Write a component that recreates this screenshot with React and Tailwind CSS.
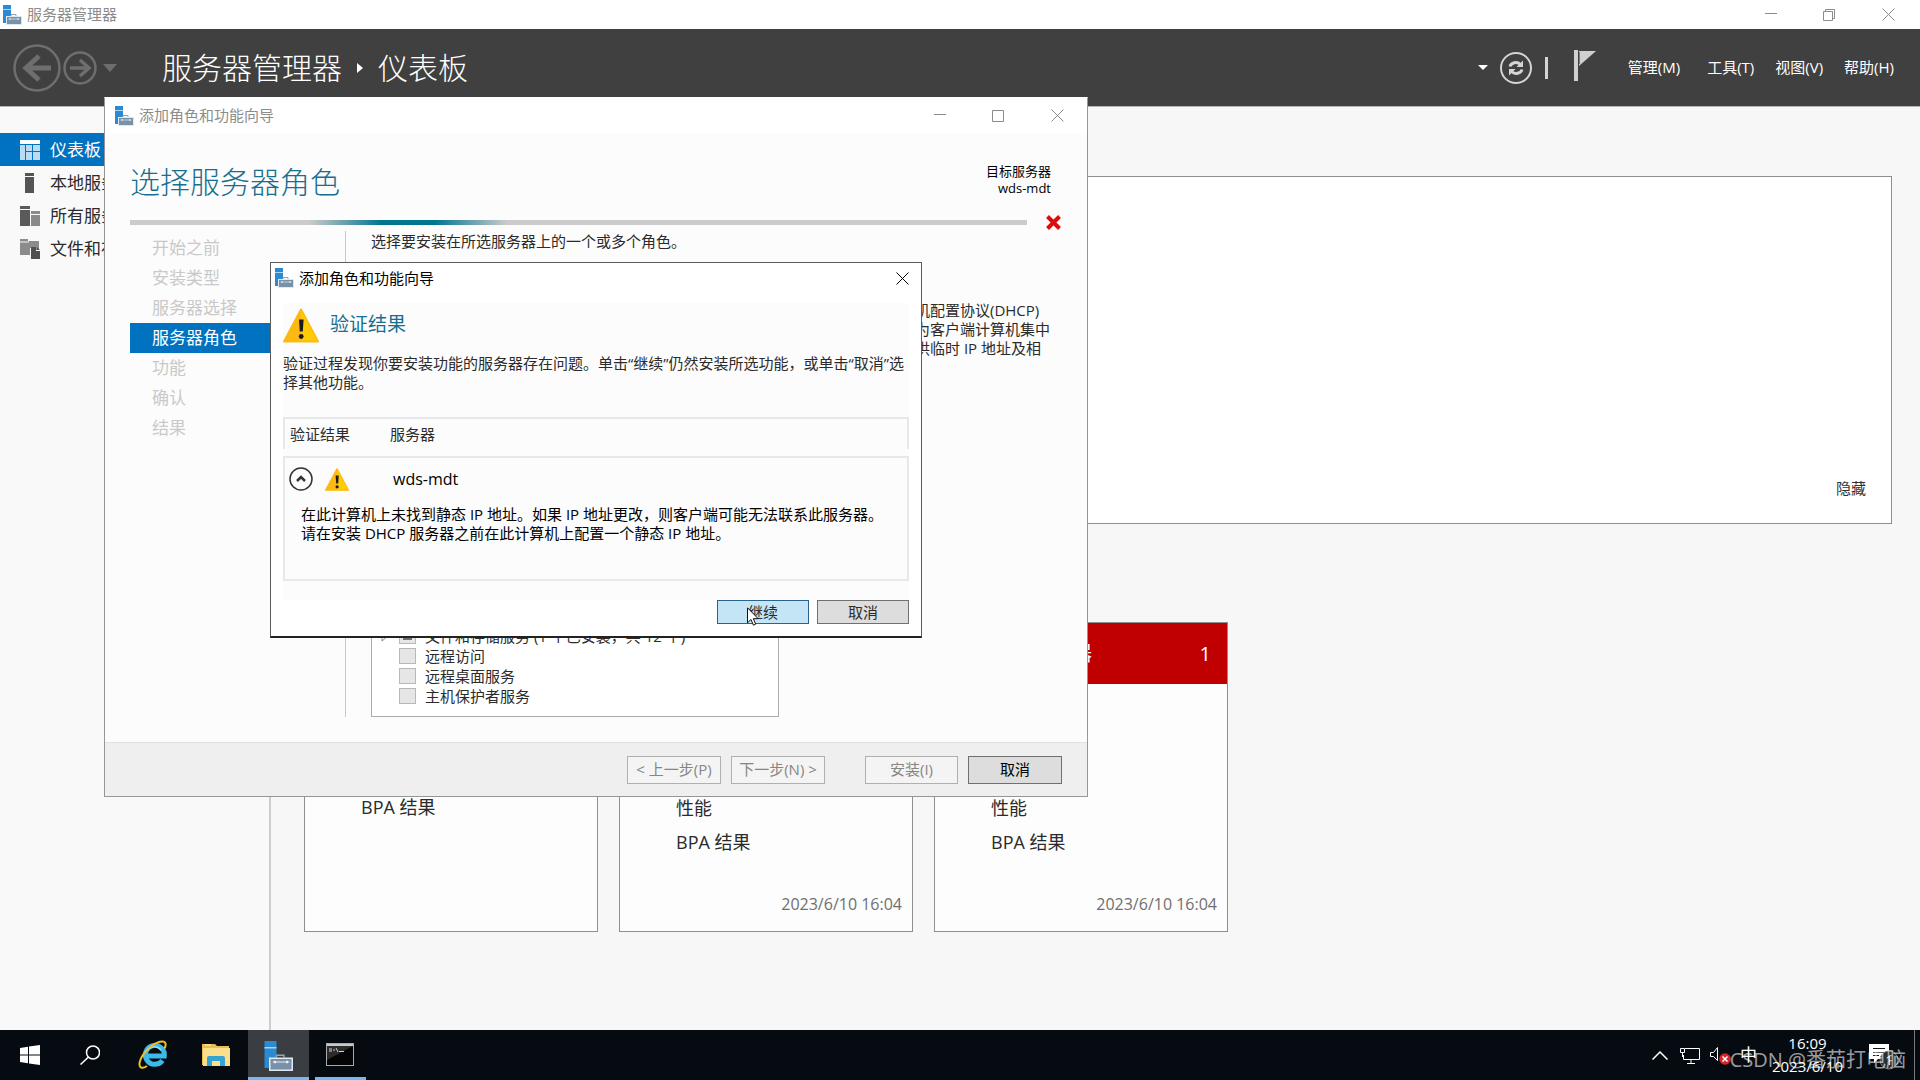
import { useState } from "react";

const navItems = [
  { label: "仪表板", icon: DashboardIcon, active: true },
  { label: "本地服务器", icon: ServerIcon },
  { label: "所有服务器", icon: ServersIcon },
  { label: "文件和存储服务", icon: StorageIcon },
];

const menus = ["管理(M)", "工具(T)", "视图(V)", "帮助(H)"];

const steps = ["开始之前", "安装类型", "服务器选择", "服务器角色", "功能", "确认", "结果"];

const roles = [
  { label: "文件和存储服务 (1 个已安装，共 12 个)", partial: true },
  { label: "远程访问" },
  { label: "远程桌面服务" },
  { label: "主机保护者服务" },
];

const tiles = [
  { rows: ["BPA 结果"], offset: true },
  { rows: ["性能", "BPA 结果"], time: "2023/6/10 16:04" },
  { rows: ["性能", "BPA 结果"], time: "2023/6/10 16:04", title: "所有服务器", count: 1 },
];

/* ---------- icons ---------- */

function AppIcon({ className }) {
  return (
    <svg viewBox="0 0 20 20" className={className} aria-hidden="true">
      <path d="M1 0h8v18H1z" fill="#2b8ad2" />
      <path d="M1 4h8v1H1z" fill="#a9d4f2" />
      <path d="M9 11V9.500h5V11" fill="none" stroke="#8fa5b9" />
      <rect x="4.500" y="11.500" width="15" height="8" fill="#7890a8" stroke="#dfe8f0" />
      <path d="M6.500 14h11" stroke="#dfe8f0" strokeWidth=".7" fill="none" />
      <path d="M8 13.200v1.600M16 13.200v1.600" stroke="#fff" fill="none" />
    </svg>
  );
}

function DashboardIcon() {
  return (
    <svg width="20" height="20" viewBox="0 0 20 20" aria-hidden="true">
      <path d="M0 0h20v4H0z" fill="#fff" />
      <path d="M0 5h5v15H0zM6 5h6v6H6zM13 5h7v6h-7zM6 12h6v8H6zM13 12h7v8h-7z" fill="#b9dcf3" />
    </svg>
  );
}

function ServerIcon() {
  return (
    <svg width="20" height="20" viewBox="0 0 20 20" aria-hidden="true">
      <path d="M5 0h9v3H5zM5 4h9v16H5z" fill="#555" />
    </svg>
  );
}

function ServersIcon() {
  return (
    <svg width="20" height="20" viewBox="0 0 20 20" aria-hidden="true">
      <path d="M0 0h10v3H0zM0 4h10v16H0z" fill="#5a5a5a" />
      <path d="M11 5h9v3h-9zM11 9h9v11h-9z" fill="#8a8a8a" />
    </svg>
  );
}

function StorageIcon() {
  return (
    <svg width="20" height="20" viewBox="0 0 20 20" aria-hidden="true">
      <path d="M0 0h8v2h11v9h-5V9h-4v7H0z" fill="#8c8c8c" />
      <path d="M0 3h9" stroke="#f8f8f8" />
      <path d="M11 8h5v4h4v8h-9z" fill="#505050" />
      <path d="M17 8l3 3h-3z" fill="#505050" />
    </svg>
  );
}

function WarningIcon({ className }) {
  return (
    <svg viewBox="0 0 36 34" className={className} aria-hidden="true">
      <path d="M18 1L35 33H1z" fill="#fdb913" stroke="#fdb913" strokeWidth="2" strokeLinejoin="round" />
      <path d="M18 2L34 32H18z" fill="#ffcb05" />
      <path d="M16 11h4.600l-.8 12h-3z" fill="#1a1a1a" />
      <circle cx="18.200" cy="28" r="2.400" fill="#1a1a1a" />
    </svg>
  );
}

function CloseGlyph() {
  return (
    <svg width="13" height="13" viewBox="0 0 13 13" fill="none" stroke="currentColor" aria-hidden="true">
      <path d="M.5 .5l12 12M12.500 .5l-12 12" />
    </svg>
  );
}

function MinGlyph() {
  return (
    <svg width="12" height="13" viewBox="0 0 12 13" stroke="currentColor" aria-hidden="true">
      <path d="M0 5.500h12" />
    </svg>
  );
}

function MaxGlyph() {
  return (
    <svg width="12" height="12" viewBox="0 0 12 12" fill="none" stroke="currentColor" aria-hidden="true">
      <path d="M.5 .5h11v11H.5z" />
    </svg>
  );
}

function RestoreGlyph() {
  return (
    <svg width="12" height="12" viewBox="0 0 12 12" fill="none" stroke="currentColor" aria-hidden="true">
      <path d="M.5 2.500h9v9h-9zM2.500 2.500v-2h9v9h-2" />
    </svg>
  );
}

/* ---------- main window ---------- */

function CaptionButtons({ maximized = false }) {
  return (
    <div className="flex text-[#8c8c8c]">
      <button aria-label="最小化" className="flex h-7 w-[58px] items-center justify-center"><MinGlyph /></button>
      <button aria-label={maximized ? "还原" : "最大化"} className="flex h-7 w-[58px] items-center justify-center">
        {maximized ? <RestoreGlyph /> : <MaxGlyph />}
      </button>
      <button aria-label="关闭" className="flex h-7 w-[60px] items-center justify-center"><CloseGlyph /></button>
    </div>
  );
}

function Header() {
  return (
    <header className="flex h-[78px] shrink-0 items-center border-b border-[#b4b4b4] bg-[#404040] pl-[13px] text-white">
      <button aria-label="后退">
        <svg width="48" height="48" viewBox="0 0 48 48" fill="none" stroke="#6e6e6e" aria-hidden="true">
          <circle cx="24" cy="24" r="22.500" strokeWidth="2.500" />
          <path d="M38 24H13M26 12L13 24l13 12" strokeWidth="5" />
        </svg>
      </button>
      <button aria-label="前进" className="ml-0.5">
        <svg width="34" height="34" viewBox="0 0 34 34" fill="none" stroke="#6e6e6e" aria-hidden="true">
          <circle cx="17" cy="17" r="15.500" strokeWidth="2.500" />
          <path d="M7 17h18M17 9l9 8-9 8" strokeWidth="3.500" />
        </svg>
      </button>
      <button aria-label="历史记录" className="ml-1.5">
        <svg width="14" height="8" viewBox="0 0 14 8" aria-hidden="true"><path d="M0 0h14L7 8z" fill="#6e6e6e" /></svg>
      </button>
      <h1 className="ml-[45px] flex items-center text-[30px] leading-10 font-light">
        服务器管理器
        <svg width="6" height="10" viewBox="0 0 6 10" className="mx-[15px]" aria-hidden="true"><path d="M0 0l6 5-6 5z" fill="#fff" /></svg>
        仪表板
      </h1>
      <div className="ml-auto flex items-center pr-[26px]">
        <button aria-label="刷新选项">
          <svg width="10" height="5" viewBox="0 0 10 5" aria-hidden="true"><path d="M0 0h10L5 5z" fill="#fff" /></svg>
        </button>
        <button aria-label="刷新" className="ml-3">
          <svg width="32" height="32" viewBox="0 0 32 32" fill="none" stroke="#d4d4d4" aria-hidden="true">
            <circle cx="16" cy="16" r="15" strokeWidth="2" />
            <path d="M10 14.500c1-4 7-5.500 10.500-2M22 17.500c-1 4-7 5.500-10.500 2" strokeWidth="3" />
            <path d="M23 8.500v6.500h-6.500zM9 23.500V17h6.500z" fill="#d4d4d4" stroke="none" />
          </svg>
        </button>
        <div className="ml-[13px] h-[22px] w-[3px] bg-[#d4d4d4]" />
        <button aria-label="通知" className="ml-[26px] mb-1">
          <svg width="22" height="31" viewBox="0 0 22 31" aria-hidden="true">
            <path d="M0 0h4v31H0z" fill="#d0d0d0" />
            <path d="M5 1h17L5 16z" fill="#d0d0d0" />
            <path d="M5.500 2v12" stroke="#777" />
          </svg>
        </button>
        <nav className="ml-8 flex gap-[21px] pb-0.5 text-[15px] leading-5">
          {menus.map((m) => (
            <button key={m} className="first:mr-1.5">{m}</button>
          ))}
        </nav>
      </div>
    </header>
  );
}

function SideNav() {
  return (
    <nav className="w-[271px] shrink-0 border-r-2 border-[#cdcdcd] bg-[#f9f9f9] pt-[26px]">
      {navItems.map(({ label, icon: Icon, active }) => (
        <a
          key={label}
          href="#"
          className={`flex h-[33px] items-center gap-2.5 pl-5 text-[17px] whitespace-nowrap ${active ? "bg-[#0072c0] text-white" : "text-[#2b2b2b]"}`}
        >
          <Icon />
          {label}
        </a>
      ))}
    </nav>
  );
}

function Tile({ rows, time, title, count, offset }) {
  return (
    <section className="flex h-[310px] w-[294px] flex-col border border-[#8f8f8f] bg-[#fdfdfd]">
      {title && (
        <h2 className="flex h-[61px] shrink-0 items-center justify-between bg-[#c00000] pr-4 pl-[57px] text-[20px] text-white">
          {title}
          <span>{count}</span>
        </h2>
      )}
      <div className={`mt-auto pl-14 text-[18px] leading-[34px] text-[#2b2b2b] ${offset ? "mb-[35px]" : ""}`}>
        {rows.map((r) => (
          <p key={r}>{r}</p>
        ))}
      </div>
      <div className="flex h-[72px] items-center justify-end pt-5 pr-2.5 pb-0.5 text-[16px] text-[#6f6f6f]">{time}</div>
    </section>
  );
}

function Dashboard() {
  return (
    <main className="flex-1 bg-[#f7f7f7] pt-[69px] pr-7 pl-[33px]">
      <section className="flex h-[348px] items-end justify-end border border-[#8f8f8f] bg-white pr-[25px] pb-[25px]">
        <button className="text-[15px] leading-5 text-[#333]">隐藏</button>
      </section>
      <div className="mt-[98px] flex gap-[21px]">
        {tiles.map((t, i) => (
          <Tile key={i} {...t} />
        ))}
      </div>
    </main>
  );
}

/* ---------- wizard ---------- */

function RoleRow({ label, partial }) {
  return (
    <label className="flex h-5 items-center text-[15px] whitespace-nowrap text-[#2b2b2b]">
      <span className="w-[18px]">
        {partial && (
          <svg width="8" height="12" viewBox="0 0 8 12" fill="#fff" stroke="#8a8a8a" aria-hidden="true"><path d="M1 1l6 5-6 5z" /></svg>
        )}
      </span>
      <span className="grid">
        <input type="checkbox" disabled className="col-start-1 row-start-1 h-4 w-[17px] appearance-none border border-[#b8b8b8] bg-[#e6e6e6]" />
        {partial && <span className="col-start-1 row-start-1 m-1 bg-[#707070]" />}
      </span>
      <span className="ml-[9px]">{label}</span>
    </label>
  );
}

function Wizard() {
  return (
    <section
      aria-label="添加角色和功能向导"
      className="absolute top-[97px] left-[104px] flex h-[700px] w-[984px] flex-col border border-[#969696] border-t-white bg-[#fcfcfc]"
    >
      <div className="flex h-[35px] shrink-0 items-center bg-white pl-[9px] text-[15px] text-[#8c8c8c]">
        <AppIcon className="mr-[5px] size-5" />
        <span className="mr-auto">添加角色和功能向导</span>
        <CaptionButtons />
      </div>

      <div className="flex h-[89px] shrink-0 items-center justify-between pr-9 pl-[25px]">
        <h2 className="pt-2 text-[30px] leading-10 font-light text-[#166f8f]">选择服务器角色</h2>
        <p className="pt-1 text-right text-[13px] leading-[17px] text-black">
          目标服务器
          <br />
          wds-mdt
        </p>
      </div>

      <div className="-mt-[7px] flex h-[15px] shrink-0 items-center gap-[19px] pr-[26px] pl-[25px]">
        <div className="h-[5px] flex-1 bg-[linear-gradient(to_right,#cbcbcb_20%,#007590_28%,#007590_34%,#cbcbcb_42%)]" />
        <svg width="15" height="15" viewBox="0 0 15 15" stroke="#e00b0b" strokeWidth="4" aria-hidden="true">
          <path d="M1.500 1.500l12 12M13.500 1.500l-12 12" />
        </svg>
      </div>

      <div className="flex min-h-0 flex-1 pt-px pb-[25px] pl-[25px]">
        <ol className="w-[216px] border-r border-[#c8c8c8] pt-0.5">
          {steps.map((s) => (
            <li
              key={s}
              className={`h-[30px] pl-[22px] text-[17px] leading-[30px] ${s === "服务器角色" ? "bg-[#0072c0] text-white" : "text-[#c9c9c9]"}`}
            >
              {s}
            </li>
          ))}
        </ol>
        <div className="ml-[25px] flex w-[408px] flex-col text-[15px] text-[#2b2b2b]">
          <p className="leading-5">选择要安装在所选服务器上的一个或多个角色。</p>
          <div className="mt-11 flex flex-1 flex-col justify-end border border-[#ababab] bg-white pb-2.5 pl-[9px]">
            {roles.map((r) => (
              <RoleRow key={r.label} {...r} />
            ))}
          </div>
        </div>
        <p className="ml-[91px] pt-[70px] text-[15px] leading-[19px] whitespace-nowrap text-[#2b2b2b]">
          动态主机配置协议(DHCP)
          <br />
          服务器为客户端计算机集中
          <br />
          管理提供临时 IP 地址及相
        </p>
      </div>

      <footer className="flex h-[54px] shrink-0 items-center justify-end border-t border-[#e0e0e0] bg-[#efefef] pr-[25px] text-[15px]">
        <button disabled className="h-7 w-[94px] border border-[#b0b0b0] bg-[#f4f4f4] text-[#868686]">{"< 上一步(P)"}</button>
        <button disabled className="ml-2.5 h-7 w-[94px] border border-[#b0b0b0] bg-[#f4f4f4] text-[#868686]">{"下一步(N) >"}</button>
        <button disabled className="ml-10 h-7 w-[93px] border border-[#b0b0b0] bg-[#f4f4f4] text-[#868686]">安装(I)</button>
        <button className="ml-2.5 h-7 w-[94px] border border-[#707070] bg-[#dddddd] text-black">取消</button>
      </footer>
    </section>
  );
}

function ValidationDialog() {
  const [open, setOpen] = useState(true);
  return (
    <section
      role="dialog"
      aria-label="验证结果"
      className="absolute top-[262px] left-[270px] flex h-[376px] w-[652px] flex-col border border-b-2 border-[#5c5c5c] border-b-[#222] bg-white px-3 text-[15px] text-[#2b2b2b]"
    >
      <div className="-mx-[9px] flex h-[30px] shrink-0 items-center text-black">
        <AppIcon className="mr-[5px] size-5" />
        <span className="mr-auto">添加角色和功能向导</span>
        <button aria-label="关闭" className="flex size-[30px] items-center justify-center pr-0.5"><CloseGlyph /></button>
      </div>

      <div className="mt-2.5 flex flex-1 flex-col bg-[#fcfcfc]">
        <div className="mt-[5px] flex items-center gap-[11px]">
          <WarningIcon className="h-[35px] w-9" />
          <h2 className="pb-1 text-[19px] leading-6 text-[#166f8f]">验证结果</h2>
        </div>
        <p className="mt-[11px] leading-[19px]">
          验证过程发现你要安装功能的服务器存在问题。单击“继续”仍然安装所选功能，或单击“取消”选择其他功能。
        </p>

        <table className="mt-[25px] w-full border-separate border-spacing-0 text-left">
          <thead>
            <tr className="h-8">
              <th className="w-[107px] border-t-2 border-l-2 border-[#e8e8e8] pl-[5px] font-normal">验证结果</th>
              <th className="border-t-2 border-r-2 border-[#e8e8e8] font-normal">服务器</th>
            </tr>
          </thead>
          <tbody className="before:block before:h-[7px] before:content-['']">
            <tr className="h-11">
              <td className="border-t-2 border-l-2 border-[#e8e8e8] pl-1">
                <div className="flex items-center gap-3">
                  <button aria-label="折叠" aria-expanded={open} onClick={() => setOpen((o) => !o)}>
                    <svg width="24" height="24" viewBox="0 0 24 24" fill="none" stroke="#333" aria-hidden="true">
                      <circle cx="12" cy="12" r="11" strokeWidth="1.500" />
                      <path d="M8 14l4-4 4 4" strokeWidth="2.500" />
                    </svg>
                  </button>
                  <WarningIcon className="h-[23px] w-6" />
                </div>
              </td>
              <td className="border-t-2 border-r-2 border-[#e8e8e8] pl-[3px] text-[16px] text-black">wds-mdt</td>
            </tr>
            <tr className="h-[81px]">
              <td colSpan={2} className="border-x-2 border-b-2 border-[#e8e8e8] pt-[5px] pl-4 align-top leading-[19px] text-black">
                {open && (
                  <>
                    在此计算机上未找到静态 IP 地址。如果 IP 地址更改，则客户端可能无法联系此服务器。
                    <br />
                    请在安装 DHCP 服务器之前在此计算机上配置一个静态 IP 地址。
                  </>
                )}
              </td>
            </tr>
          </tbody>
        </table>
      </div>

      <div className="flex shrink-0 justify-end gap-2 pb-3">
        <button className="h-6 w-[92px] border border-[#2c628b] bg-[#c4e5f6] leading-5">继续</button>
        <button className="h-6 w-[92px] border border-[#707070] bg-[#dddddd] leading-5">取消</button>
      </div>

      <svg width="12" height="19" viewBox="0 0 12 19" className="absolute top-[344px] left-[476px]" aria-hidden="true">
        <path d="M.5 .8v15l3.500-3.300 2.400 5.700 2.300-1-2.400-5.500h4.900z" fill="#fff" stroke="#111" />
      </svg>
    </section>
  );
}

/* ---------- taskbar ---------- */

function Taskbar() {
  return (
    <footer className="relative flex h-[50px] shrink-0 bg-[#060b11] text-white">
      <button aria-label="开始" className="flex w-[60px] items-center justify-center">
        <svg width="20" height="20" viewBox="0 0 20 20" fill="#fff" aria-hidden="true">
          <path d="M0 3l8-1.200v7.700H0zM9 1.600L20 0v9.500H9zM0 10.500h8v7.700L0 17zM9 10.500h11V20L9 18.400z" />
        </svg>
      </button>
      <button aria-label="搜索" className="flex w-[60px] items-center justify-center">
        <svg width="20" height="20" viewBox="0 0 20 20" fill="none" stroke="#fff" strokeWidth="1.500" aria-hidden="true">
          <circle cx="13" cy="7.500" r="6.500" />
          <path d="M8.500 12L.5 19.500" />
        </svg>
      </button>
      <button aria-label="Internet Explorer" className="flex w-[66px] items-center justify-center">
        <svg width="30" height="30" viewBox="0 0 30 30" fill="none" aria-hidden="true">
          <path d="M24.500 20.500a9.500 9.500 0 1 1 1.800-4.500H9" stroke="#3cb8ec" strokeWidth="5" />
          <path d="M8 12a9 9 0 0 1 15-2" stroke="#8fe0fb" strokeWidth="1.500" />
          <path d="M9 26C4 29.500 0 28 2 21 4.500 12.500 16 2 24 1.500c4-.2 4.500 3 2.500 7" stroke="#f5bd1f" strokeWidth="2" />
        </svg>
      </button>
      <button aria-label="文件资源管理器" className="flex w-[62px] items-center justify-center pr-0.5">
        <svg width="28" height="24" viewBox="0 0 28 24" aria-hidden="true">
          <path d="M0 1h13l2 2h12v19H0z" fill="#e9bd54" />
          <path d="M1 5h27v18H1z" fill="#fbdf8b" />
          <path d="M3 2h6" stroke="#fff3c9" />
          <path d="M5 23v-8q0-2 2-2h14q2 0 2 2v8h-5v-5h-8v5z" fill="#35a3d4" />
        </svg>
      </button>
      <button aria-label="服务器管理器" className="flex w-[61px] items-center justify-center border-b-[3px] border-[#76b9ed] bg-[#3a3e42] pt-1 pr-0.5">
        <AppIcon className="size-[30px]" />
      </button>
      <button aria-label="命令提示符" className="ml-1.5 flex w-[51px] items-center justify-center border-b-[3px] border-[#76b9ed] pt-0.5 pr-0.5">
        <svg width="28" height="23" viewBox="0 0 28 23" aria-hidden="true">
          <rect x=".5" y=".5" width="27" height="22" fill="#050505" stroke="#a9a9a9" />
          <path d="M1 1h26v2H1z" fill="#c9c9c9" />
          <path d="M1 3h26L1 17z" fill="#2b2b2b" />
          <path d="M3 6h3M3 8h3M8 6v2M10 5l2 4M13 8.500h5" stroke="#d0d0d0" fill="none" />
        </svg>
      </button>

      <div className="ml-auto flex items-center">
        <button aria-label="显示隐藏的图标">
          <svg width="16" height="9" viewBox="0 0 16 9" fill="none" stroke="#fff" strokeWidth="1.500" aria-hidden="true"><path d="M.5 8.500L8 1l7.500 7.500" /></svg>
        </button>
        <button aria-label="网络" className="ml-3">
          <svg width="20" height="17" viewBox="0 0 20 17" fill="none" stroke="#fff" aria-hidden="true">
            <path d="M5 1.500h14.500v11H3.500V8M11 13v3M7 16.500h8M.5 1.500h4v4h-4zM2.500 5.500V10" />
          </svg>
        </button>
        <button aria-label="音量" className="ml-2.5">
          <svg width="22" height="20" viewBox="0 0 22 20" fill="none" aria-hidden="true">
            <path d="M.5 7.500h3l4-5v13l-4-4h-3z" stroke="#fff" />
            <circle cx="15" cy="14" r="5.800" fill="#d8232a" />
            <path d="M12.500 11.500l5 5M17.500 11.500l-5 5" stroke="#fff" strokeWidth="1.500" />
          </svg>
        </button>
        <button className="ml-2 text-[17px] leading-5">中</button>
        <time className="ml-[15px] text-center text-[15px] leading-[23px]">
          16:09
          <br />
          2023/6/10
        </time>
        <button aria-label="1 个新通知" className="mr-[15px] ml-[26px]">
          <svg width="30" height="30" viewBox="0 0 30 30" aria-hidden="true">
            <path d="M0 4h20v15H9l-4 4v-4H0z" fill="#fff" />
            <path d="M4 8.500h12M4 12.500h12M4 15.500h6" stroke="#10151b" />
            <circle cx="20" cy="20" r="9" fill="#2c3035" stroke="#7d7d7d" />
            <text x="20" y="25" fill="#fff" fontSize="13" textAnchor="middle">1</text>
          </svg>
        </button>
        <div className="h-full w-1.5 border-l border-[#7a7a7a]" />
      </div>
      <span className="pointer-events-none absolute right-[14px] bottom-[7px] text-[20px] leading-[26px] whitespace-nowrap text-white/60">CSDN @番茄打电脑</span>
    </footer>
  );
}

export default function App() {
  return (
    <div className="relative flex min-h-screen flex-col overflow-hidden bg-white font-['Open_Sans','Noto_Sans_CJK_SC',sans-serif]">
      <div className="flex h-[29px] shrink-0 items-center pr-0.5 pl-0.5 text-[15px] text-[#8c8c8c]">
        <AppIcon className="mr-[5px] size-5" />
        <span className="mr-auto">服务器管理器</span>
        <CaptionButtons maximized />
      </div>
      <Header />
      <div className="flex flex-1">
        <SideNav />
        <Dashboard />
      </div>
      <Taskbar />
      <Wizard />
      <ValidationDialog />
    </div>
  );
}
